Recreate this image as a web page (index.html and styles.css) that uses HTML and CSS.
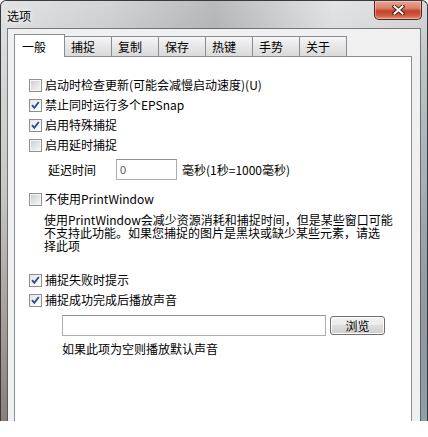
FILE: index.html
```html
<!DOCTYPE html>
<html lang="zh-CN">
<head>
    <meta charset="UTF-8">
    <meta name="viewport" content="width=device-width, initial-scale=1.0">
    <title>选项</title>
    <link rel="stylesheet" href="styles.css">
</head>
<body>
    <div class="window">
        <div class="titlebar">
            <span class="title">选项</span>
            <button class="close-btn" title="关闭">
                <svg width="13" height="10" viewBox="0 0 13 10">
                    <path d="M2.5 1.5 L10.5 8.5 M10.5 1.5 L2.5 8.5" stroke="#4a2018" stroke-width="4" stroke-linecap="square"/>
                    <path d="M2.5 1.5 L10.5 8.5 M10.5 1.5 L2.5 8.5" stroke="#ffffff" stroke-width="2" stroke-linecap="square"/>
                </svg>
            </button>
        </div>

        <div class="client">
            <div class="tabs">
                <div class="tab active">一般</div>
                <div class="tab">捕捉</div>
                <div class="tab">复制</div>
                <div class="tab">保存</div>
                <div class="tab">热键</div>
                <div class="tab">手势</div>
                <div class="tab">关于</div>
            </div>

            <div class="panel">
                <label class="check-row"><span class="checkbox"></span>启动时检查更新(可能会减慢启动速度)(U)</label>
                <label class="check-row"><span class="checkbox checked"><svg width="11" height="11" viewBox="0 0 11 11"><path d="M2 5.2 L4.3 7.8 L8.8 2" fill="none" stroke="#2f4b8f" stroke-width="1.9"/></svg></span>禁止同时运行多个EPSnap</label>
                <label class="check-row"><span class="checkbox checked"><svg width="11" height="11" viewBox="0 0 11 11"><path d="M2 5.2 L4.3 7.8 L8.8 2" fill="none" stroke="#2f4b8f" stroke-width="1.9"/></svg></span>启用特殊捕捉</label>
                <label class="check-row"><span class="checkbox"></span>启用延时捕捉</label>

                <div class="delay-row">
                    <span class="delay-label">延迟时间</span>
                    <input type="text" class="field delay-input" value="0">
                    <span class="delay-unit">毫秒(1秒=1000毫秒)</span>
                </div>

                <label class="check-row gap-top"><span class="checkbox"></span>不使用PrintWindow</label>
                <p class="note">
                    <span>使用PrintWindow会减少资源消耗和捕捉时间，但是某些窗口可能</span>
                    <span>不支持此功能。如果您捕捉的图片是黑块或缺少某些元素，请选</span>
                    <span>择此项</span>
                </p>

                <label class="check-row section-top"><span class="checkbox checked"><svg width="11" height="11" viewBox="0 0 11 11"><path d="M2 5.2 L4.3 7.8 L8.8 2" fill="none" stroke="#2f4b8f" stroke-width="1.9"/></svg></span>捕捉失败时提示</label>
                <label class="check-row"><span class="checkbox checked"><svg width="11" height="11" viewBox="0 0 11 11"><path d="M2 5.2 L4.3 7.8 L8.8 2" fill="none" stroke="#2f4b8f" stroke-width="1.9"/></svg></span>捕捉成功完成后播放声音</label>

                <div class="sound-row">
                    <input type="text" class="field sound-input" value="">
                    <button class="btn">浏览</button>
                </div>
                <p class="hint">如果此项为空则播放默认声音</p>
            </div>
        </div>
    </div>
</body>
</html>
```

FILE: styles.css
```css
/* Fenêtre style Windows 7 */
body {
    margin: 0;
    background: #ffffff;
    font-family: "Noto Sans CJK SC", "Liberation Sans", sans-serif;
    font-size: 12px;
    color: #000;
}

.window {
    width: 428px;
    height: 421px;
    box-sizing: border-box;
    display: flex;
    flex-direction: column;
    overflow: hidden;
    border: 1px solid #3a3a3a;
    border-bottom: none;
    border-radius: 6px 6px 0 0;
    background:
        linear-gradient(to bottom, rgba(255,255,255,0), rgba(150,168,178,0.9)) right / 8px 100% no-repeat,
        linear-gradient(to right, rgba(255,255,255,0.35), rgba(255,255,255,0) 25%, rgba(0,0,0,0.12) 50%, rgba(255,255,255,0.35) 78%, rgba(255,255,255,0.1) 100%),
        linear-gradient(to bottom, #d3d5d6 0, #c1c4c5 15%, #a9aaa9 45%, #7a6e67 75%, #4a3e38 100%);
}

.titlebar {
    height: 28px;
    display: flex;
    align-items: flex-start;
    padding: 0 5px 0 6px;
    flex-shrink: 0;
}

.title {
    margin-top: 7px;
    font-size: 12px;
    line-height: 16px;
    text-shadow: 0 0 6px #fff, 0 0 3px #fff;
}

.close-btn {
    margin-left: auto;
    width: 48px;
    height: 19px;
    padding: 0;
    border: 1px solid #5a2216;
    border-top: none;
    border-radius: 0 0 5px 5px;
    background: linear-gradient(to bottom, #e7a596 0%, #d9826c 40%, #c5412a 55%, #cf5a40 80%, #e0907a 100%);
    box-shadow: inset 0 0 0 1px rgba(255,255,255,0.35);
    display: flex;
    align-items: center;
    justify-content: center;
}

.client {
    flex: 1;
    margin: 0 7px;
    background: #f0f0f0;
    padding: 5px 8px 0 6px;
    box-shadow: 0 0 0 1px rgba(60,60,60,0.6);
    display: flex;
    flex-direction: column;
    overflow: hidden;
}

/* Onglets */
.tabs {
    display: flex;
    align-items: flex-end;
    height: 22px;
}

.tab {
    box-sizing: border-box;
    width: 48px;
    height: 20px;
    margin-left: -1px;
    padding-left: 6px;
    border: 1px solid #898c95;
    border-bottom: none;
    background: linear-gradient(to bottom, #f6f6f6, #e6e6e6 50%, #dadada);
    line-height: 19px;
}

.tab.active {
    position: relative;
    z-index: 1;
    width: 51px;
    height: 23px;
    margin-left: 0;
    margin-bottom: -1px;
    padding-left: 7px;
    background: #ffffff;
    line-height: 24px;
}

.panel {
    height: 380px;
    flex-shrink: 0;
    background: #ffffff;
    border: 1px solid #898c95;
    padding: 18px 0 0 14px;
}

/* Cases à cocher */
.check-row {
    display: flex;
    align-items: center;
    height: 20px;
    gap: 3px;
    line-height: 12px;
}

.checkbox {
    box-sizing: border-box;
    width: 13px;
    height: 13px;
    border: 1px solid #8e8f8f;
    padding: 1px;
    background: linear-gradient(135deg, #cfd0d2, #f5f5f5) content-box, #f6f6f6;
    display: flex;
    align-items: center;
    justify-content: center;
    flex-shrink: 0;
}

.checkbox.checked {
    padding: 0;
    background: linear-gradient(135deg, #e4e6ea, #ffffff);
}

.checkbox svg {
    display: block;
}

.delay-row {
    display: flex;
    align-items: center;
    margin-top: 4px;
    padding-left: 19px;
}

.delay-label {
    width: 68px;
}

.field {
    box-sizing: border-box;
    height: 21px;
    border: 1px solid #abadb3;
    border-top-color: #8e9399;
    background: #fff;
    font-family: "Liberation Sans", sans-serif;
    font-size: 11px;
    padding: 0 3px;
    margin: 0;
    color: #555;
}

.delay-input {
    width: 61px;
}

.delay-unit {
    margin-left: 5px;
}

.gap-top {
    margin-top: 9px;
}

.note {
    margin: 4px 0 0 15px;
    line-height: 13px;
}

.note span {
    display: block;
    white-space: nowrap;
}

.section-top {
    margin-top: 18px;
}

.sound-row {
    display: flex;
    align-items: center;
    margin-top: 5px;
    padding-left: 33px;
}

.sound-input {
    width: 264px;
}

.btn {
    margin-left: 4px;
    width: 55px;
    height: 19px;
    padding: 0;
    border: 1px solid #707070;
    border-radius: 3px;
    background: linear-gradient(to bottom, #f2f2f2, #ebebeb 50%, #dddddd 50%, #cfcfcf);
    box-shadow: inset 0 0 0 1px #fcfcfc;
    font-family: inherit;
    font-size: 12px;
    line-height: 16px;
}

.hint {
    margin: 7px 0 0 33px;
    line-height: 12px;
}
```
